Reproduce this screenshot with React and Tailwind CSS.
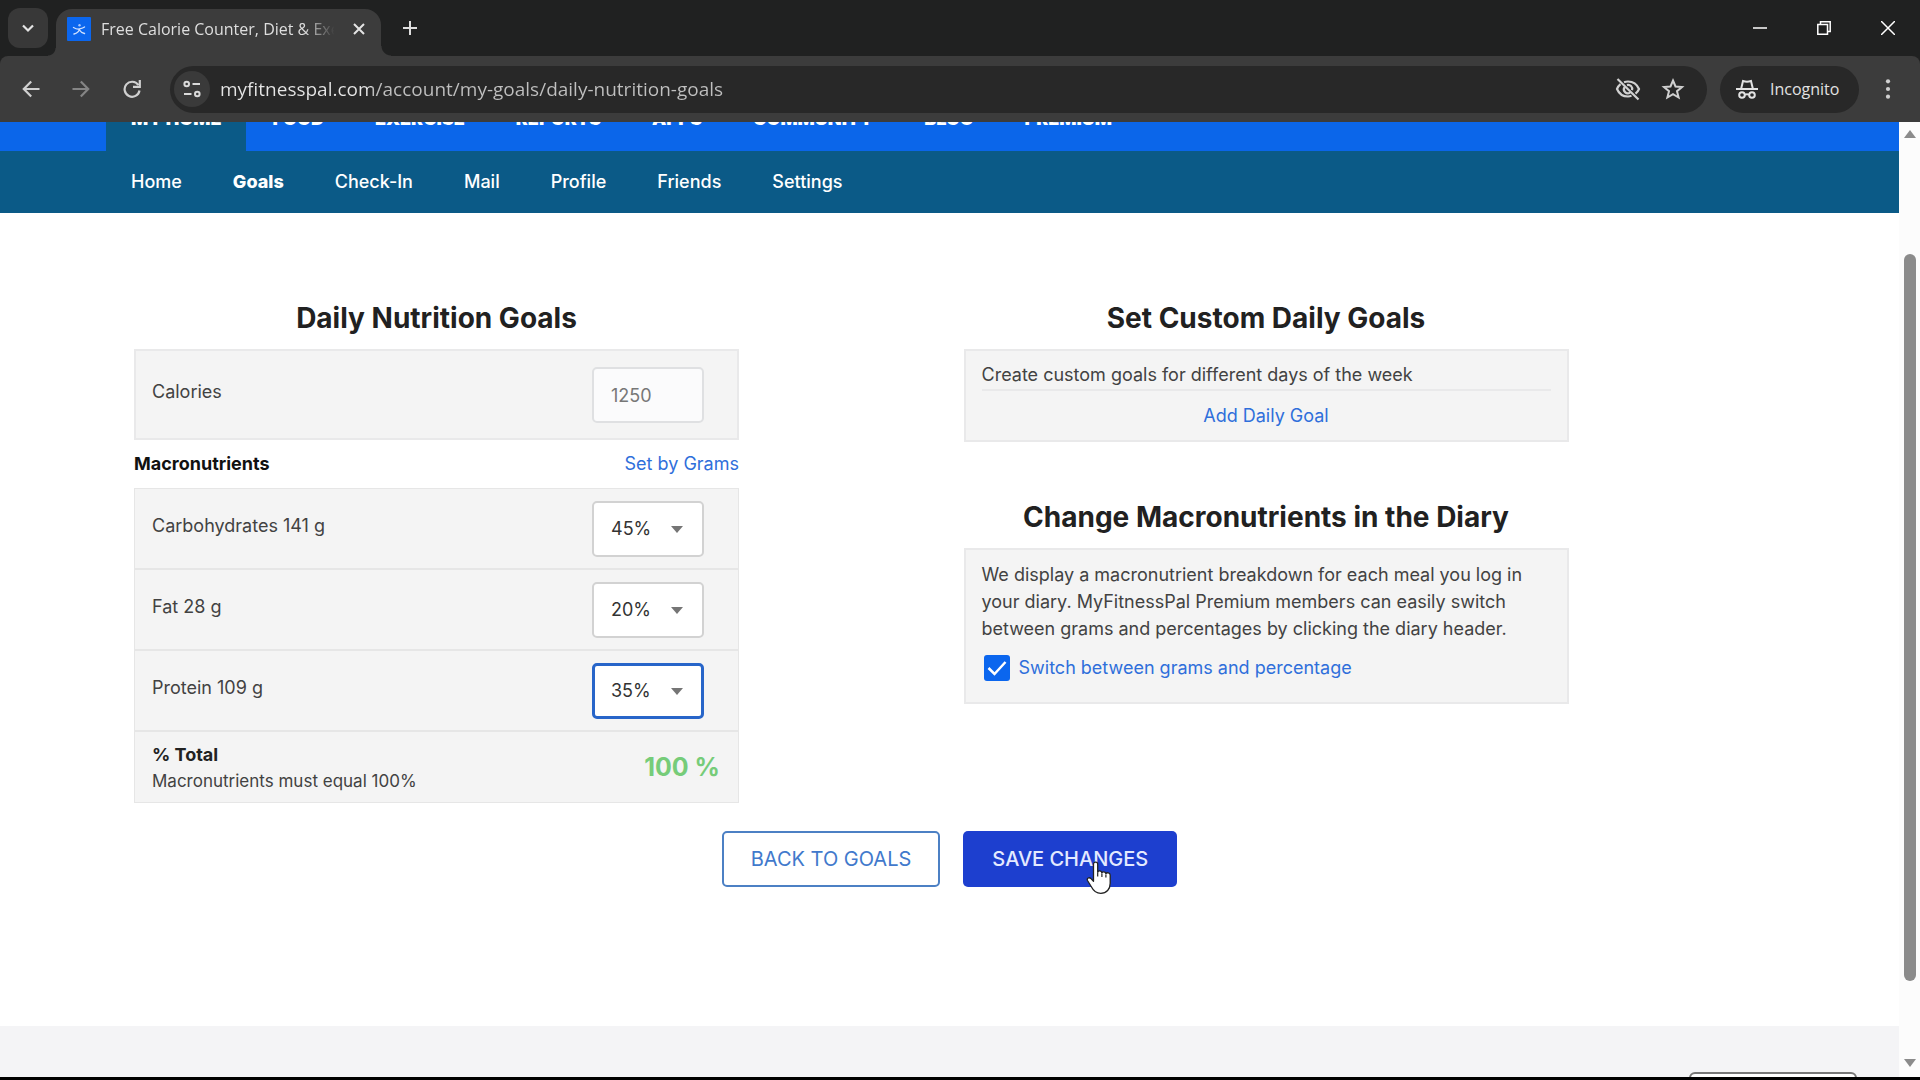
import React from "react";

const chromeFont = "font-['Open_Sans','Noto_Sans',sans-serif]";
const pageFont = "font-['Inter',sans-serif]";

const Favicon = () => (
  <svg viewBox="0 0 24 24" className="size-6 shrink-0" aria-hidden="true">
    <rect width="24" height="24" rx="1" fill="#0b66ee" />
    <circle cx="12.500" cy="8.300" r="1.200" fill="#a9c9ff" />
    <path d="M6.500 10.500c2.500 1.500 4.500 1.800 5.700 1.500s3.800-.8 5.300-2M12.300 12.500c-.4 2.500-2.800 3.800-5.300 4.500M12.500 13c1 1.800 2.300 2.800 5 3.500" stroke="#cfe0ff" strokeWidth="1.400" fill="none" strokeLinecap="round" />
  </svg>
);

const IncognitoIcon = () => (
  <svg viewBox="0 0 22 22" className="h-[22px] w-[22px] shrink-0" fill="none" stroke="#e2e2e2" strokeWidth="2" aria-hidden="true">
    <path d="M0 11h22" />
    <path d="M5.200 10.500 7 3q4 1.500 8 0l1.800 7.500" />
    <circle cx="6" cy="17" r="2.800" />
    <circle cx="16" cy="17" r="2.800" />
    <path d="M8.800 16.700q2.200-1 4.400 0" />
  </svg>
);

function TabStrip() {
  return (
    <div className={`flex h-14 shrink-0 items-stretch bg-[#202121] text-[#dedede] ${chromeFont}`}>
      <button aria-label="Search tabs" className="mt-2 ml-2 flex size-10 items-center justify-center rounded-xl bg-[#383838]">
        <svg viewBox="0 0 12 12" className="size-3" fill="none" stroke="#e4e4e4" strokeWidth="2.200" aria-hidden="true">
          <path d="M1 3.500 6 8.500l5-5" />
        </svg>
      </button>
      <div className="mt-[9px] flex flex-1">
        <div className="flex h-full w-2 items-end">
          <div className="size-2 bg-[radial-gradient(circle_at_0_0,#202121_7px,#3c3c3c_8px)]" />
        </div>
        <div className="flex w-[325px] items-center rounded-t-2xl bg-[#3c3c3c] pb-2 pl-[11px] pr-2.5">
          <Favicon />
          <span className="ml-2.5 w-[236px] overflow-hidden text-base whitespace-nowrap [mask-image:linear-gradient(to_right,black_86%,transparent_99%)]">
            Free Calorie Counter, Diet &amp; Exercise
          </span>
          <button aria-label="Close tab" className="ml-auto flex size-6 items-center justify-center">
            <svg viewBox="0 0 12 12" className="size-3" stroke="#e4e4e4" strokeWidth="2" aria-hidden="true">
              <path d="M1 1l10 10M11 1 1 11" />
            </svg>
          </button>
        </div>
        <div className="flex h-full w-2.5 items-end">
          <div className="size-2.5 bg-[radial-gradient(circle_at_100%_0,#202121_9px,#3c3c3c_10px)]" />
        </div>
        <button aria-label="New tab" className="ml-[7px] flex h-[38px] w-6 items-center justify-center">
          <svg viewBox="0 0 14 14" className="size-[14px]" stroke="#dedede" strokeWidth="2" aria-hidden="true">
            <path d="M7 0v14M0 7h14" />
          </svg>
        </button>
      </div>
      <div className="flex items-stretch">
        <button aria-label="Minimize" className="flex w-16 items-center justify-center">
          <svg viewBox="0 0 14 14" className="size-[14px]" stroke="#fff" strokeWidth="1.500" aria-hidden="true">
            <path d="M0 7h14" />
          </svg>
        </button>
        <button aria-label="Restore" className="flex w-16 items-center justify-center">
          <svg viewBox="0 0 14 14" className="size-[14px]" stroke="#fff" strokeWidth="1.500" fill="none" aria-hidden="true">
            <path d="M.8 3.500h9.700v9.700H.8zM3.500 3.500V.8h9.700v9.700h-2.700" />
          </svg>
        </button>
        <button aria-label="Close window" className="flex w-16 items-center justify-center">
          <svg viewBox="0 0 14 14" className="size-[14px]" stroke="#fff" strokeWidth="1.500" aria-hidden="true">
            <path d="M0 0l14 14M14 0 0 14" />
          </svg>
        </button>
      </div>
    </div>
  );
}

function Toolbar() {
  return (
    <div className={`flex h-[66px] shrink-0 items-center rounded-t-lg bg-[#3c3c3c] ${chromeFont}`}>
      <div className="flex">
        <button aria-label="Back" className="flex w-[61px] items-center justify-center">
          <svg viewBox="0 0 18 18" className="size-[18px]" fill="none" stroke="#d0d0d0" strokeWidth="2.200" aria-hidden="true">
            <path d="M17.500 9H2M9.200 1.500 1.800 9l7.400 7.500" />
          </svg>
        </button>
        <button aria-label="Forward" className="flex w-10 items-center justify-center">
          <svg viewBox="0 0 18 18" className="size-[18px]" fill="none" stroke="#858585" strokeWidth="2.200" aria-hidden="true">
            <path d="M.5 9H16M8.800 1.500 16.200 9l-7.400 7.500" />
          </svg>
        </button>
        <button aria-label="Reload" className="flex w-[61px] items-center justify-center">
          <svg viewBox="0 0 18 18" className="size-[18px]" fill="none" stroke="#d0d0d0" strokeWidth="2.200" aria-hidden="true">
            <path d="M15.300 5A7.500 7.500 0 1 0 16.500 10.500M16.800 0v6.800H10" />
          </svg>
        </button>
      </div>
      <div className="ml-2 flex h-[47px] flex-1 items-center rounded-full bg-[#282828] pl-1 pr-[22px]">
        <button aria-label="Site information" className="flex size-9 items-center justify-center rounded-full bg-[#3a3a3a]">
          <svg viewBox="0 0 18 18" className="size-[18px]" fill="none" stroke="#dadada" strokeWidth="2" aria-hidden="true">
            <circle cx="3.700" cy="4" r="2.300" />
            <path d="M9.500 4H17M1 14h7.500" />
            <circle cx="14.300" cy="14" r="2.300" />
          </svg>
        </button>
        <input
          aria-label="Address"
          defaultValue="myfitnesspal.com/account/my-goals/daily-nutrition-goals"
          className="ml-2.5 min-w-0 flex-1 bg-[linear-gradient(to_right,#e6e6e6_152px,#c0c0c0_152px)] bg-clip-text text-[19px] leading-7 text-transparent"
        />
        <button aria-label="Third-party cookies blocked" className="mr-5">
          <svg viewBox="0 0 26 24" className="h-6 w-[26px]" fill="none" stroke="#d0d0d0" strokeWidth="2.200" aria-hidden="true">
            <path d="M9 5.200A12 12 0 0 1 13 4.500c5 0 9 2.800 11 7.500a12.500 12.500 0 0 1-3.500 4.700M16.500 18.800a12 12 0 0 1-3.500.7c-5 0-9-2.800-11-7.500a12 12 0 0 1 3.500-4.800" />
            <path d="M12 8.100a4 4 0 0 1 5 5M15 15.600a4 4 0 0 1-5.600-5.400M2.500 2l21 20.500" />
          </svg>
        </button>
        <button aria-label="Bookmark this tab">
          <svg viewBox="0 0 24 24" className="size-6" fill="none" stroke="#d0d0d0" strokeWidth="2" aria-hidden="true">
            <path d="m12 3.500 2.500 6 6.500.5-5 4.200 1.600 6.300-5.600-3.400-5.600 3.400L8 14.200 3 10l6.500-.5z" />
          </svg>
        </button>
      </div>
      <button className="mx-[13px] flex h-[47px] w-[139px] items-center gap-3 rounded-full bg-[#282828] pl-4 text-base text-[#e2e2e2]">
        <IncognitoIcon />
        Incognito
      </button>
      <button aria-label="Menu" className="mr-4 flex w-8 items-center justify-center">
        <svg viewBox="0 0 6 20" className="h-5 w-1.5" fill="#d0d0d0" aria-hidden="true">
          <circle cx="3" cy="2.300" r="2.100" />
          <circle cx="3" cy="10" r="2.100" />
          <circle cx="3" cy="17.700" r="2.100" />
        </svg>
      </button>
    </div>
  );
}

const mainNav = ["MY HOME", "FOOD", "EXERCISE", "REPORTS", "APPS", "COMMUNITY", "BLOG", "PREMIUM"];
const subNav = ["Home", "Goals", "Check-In", "Mail", "Profile", "Friends", "Settings"];

function SiteNav() {
  return (
    <>
      <nav aria-label="Main" className="flex h-[29px] items-end gap-px overflow-hidden bg-[#0b66ea] pl-[106px] text-lg leading-6 font-black text-white">
        {mainNav.map((item) => (
          <a key={item} href="#" className={item === "MY HOME" ? "bg-[#0b5a87] px-[25px] pt-4 pb-5" : "px-[25px] pt-4 pb-5"}>
            {item}
          </a>
        ))}
      </nav>
      <nav aria-label="My home" className="flex h-[62px] items-center gap-[51px] bg-[#0b5a87] pl-[131px] text-lg font-medium text-white">
        {subNav.map((item) => (
          <a key={item} href="#" className={item === "Goals" ? "font-extrabold" : ""}>
            {item}
          </a>
        ))}
      </nav>
    </>
  );
}

const Heading = ({ children }) => (
  <h2 className="text-center text-[28px] leading-8 font-bold text-[#212121]">{children}</h2>
);

const macros = [
  { id: "carbs", label: "Carbohydrates 141 g", value: "45%" },
  { id: "fat", label: "Fat 28 g", value: "20%" },
  { id: "protein", label: "Protein 109 g", value: "35%", active: true },
];

function MacroRow({ id, label, value, active }) {
  return (
    <div className="flex items-start justify-between border-b-2 border-[#e6e6e6] pt-3 pr-[34px] pb-[11px] pl-[17px]">
      <label htmlFor={id} className="pt-[13px] leading-6">{label}</label>
      <div className="relative w-28">
        <select
          id={id}
          defaultValue={value}
          className={
            active
              ? "h-14 w-full appearance-none rounded-[5px] border-[3px] border-[#2765c9] bg-white pl-4 text-[#333]"
              : "h-14 w-full appearance-none rounded-[5px] border-2 border-[#d2d2d2] bg-white pl-[17px] text-[#333]"
          }
        >
          <option>{value}</option>
        </select>
        <svg viewBox="0 0 14 8" className="pointer-events-none absolute top-[25px] right-5 h-2 w-3.5" aria-hidden="true">
          <path d="M1 0h12L7 7z" fill="#757575" />
        </svg>
      </div>
    </div>
  );
}

function NutritionGoals() {
  return (
    <section className="max-w-[605px]">
      <Heading>Daily Nutrition Goals</Heading>
      <div className="mt-[15px] flex items-start justify-between border-2 border-[#e9e9ea] bg-[#f4f4f4] pt-4 pr-[33px] pb-[15px] pl-4">
        <label htmlFor="calories" className="pt-[13px] leading-6">Calories</label>
        <input
          id="calories"
          defaultValue="1250"
          className="h-14 w-28 rounded-[5px] border-2 border-[#dfe0e2] bg-[#fbfbfc] px-[17px] text-[#777]"
        />
      </div>
      <div className="flex h-12 items-center justify-between">
        <h3 className="font-bold text-[#111]">Macronutrients</h3>
        <a href="#" className="text-[#2f6fdb]">Set by Grams</a>
      </div>
      <div className="border border-[#e6e6e6] bg-[#f4f4f4]">
        {macros.map((m) => (
          <MacroRow key={m.id} {...m} />
        ))}
        <div className="flex items-center justify-between pt-[9px] pr-[18px] pb-[9px] pl-[17px]">
          <div>
            <p className="leading-7 font-bold text-[#222]">% Total</p>
            <p className="text-[17px] leading-6">Macronutrients must equal 100%</p>
          </div>
          <p className="text-[25px] font-bold text-[#76cc79]">100 %</p>
        </div>
      </div>
    </section>
  );
}

function CustomGoals() {
  return (
    <section>
      <Heading>Set Custom Daily Goals</Heading>
      <div className="mt-[15px] border-2 border-[#e9e9ea] bg-[#f4f4f4] px-4 pt-2.5 pb-3">
        <p className="border-b-2 border-[#e9e9ea] leading-7">Create custom goals for different days of the week</p>
        <p className="pt-[13px] text-center leading-6">
          <a href="#" className="text-[#2f6fdb]">Add Daily Goal</a>
        </p>
      </div>
    </section>
  );
}

function DiaryMacros() {
  return (
    <section>
      <Heading>Change Macronutrients in the Diary</Heading>
      <div className="mt-[15px] border-2 border-[#e9e9ea] bg-[#f4f4f4] px-4 pt-[11px] pb-5">
        <p className="leading-[27px]">
          We display a macronutrient breakdown for each meal you log in your diary. MyFitnessPal Premium members can easily
          switch between grams and percentages by clicking the diary header.
        </p>
        <label className="mt-3 flex items-center gap-[9px] pl-0.5 text-[#2f6fdb]">
          <span className="grid">
            <input type="checkbox" defaultChecked className="col-start-1 row-start-1 size-[26px] appearance-none rounded-[3px] bg-[#0b66ee]" />
            <svg viewBox="0 0 26 26" className="pointer-events-none col-start-1 row-start-1 size-[26px]" fill="none" stroke="#fff" strokeWidth="2.500" aria-hidden="true">
              <path d="m4.500 13 6 6L21.500 7" />
            </svg>
          </span>
          Switch between grams and percentage
        </label>
      </div>
    </section>
  );
}

const HandCursor = () => (
  <svg viewBox="0 0 26 34" className="pointer-events-none absolute top-[30px] left-[123px] h-[34px] w-[26px]" aria-hidden="true">
    <path
      d="M7.500 3.200c0-2.800 4.200-2.800 4.200 0v8c.6-1.900 3.900-1.600 4.200.6.700-1.600 3.700-1.200 4 .9.700-1.500 4.300-1.200 4.300 1.600v8c0 6-3.700 10-9.400 10-4.800 0-7.300-2.300-9.300-6.300L1.500 19.500c-1-2.400 1.800-3.700 3.500-1.900l2.500 2.700z"
      fill="#fff"
      stroke="#222"
      strokeWidth="1.300"
      strokeLinejoin="round"
    />
    <path d="M11.700 11.500v4M15.900 12.500v3.500M19.900 13.500v3" stroke="#222" strokeWidth="1.200" fill="none" />
  </svg>
);

function Scrollbar() {
  return (
    <div className="flex w-[21px] shrink-0 flex-col items-center bg-[#fcfcfc]">
      <svg viewBox="0 0 12 8" className="mt-2 h-2 w-3" aria-hidden="true">
        <path d="M0 8h12L6 0z" fill="#8b8b8b" />
      </svg>
      <div className="flex w-3 flex-1 flex-col pt-[116px] pb-[78px]">
        <div className="flex-1 rounded-full bg-[#8b8b8b]" />
      </div>
      <svg viewBox="0 0 12 8" className="mb-2.5 h-2 w-3" aria-hidden="true">
        <path d="M0 0h12L6 8z" fill="#8b8b8b" />
      </svg>
    </div>
  );
}

export default function App() {
  return (
    <div className="flex h-screen flex-col overflow-hidden border-b-[3px] border-black bg-[#202121]">
      <TabStrip />
      <Toolbar />
      <div className={`flex min-h-0 flex-1 bg-white ${pageFont}`}>
        <div className="flex min-w-0 flex-1 flex-col overflow-hidden">
          <SiteNav />
          <main className="flex-1 text-lg text-[#424242]">
            <div className="mr-[106px] ml-[134px] grid grid-cols-2 pt-[89px]">
              <NutritionGoals />
              <div className="flex max-w-[605px] flex-col gap-[59px]">
                <CustomGoals />
                <DiaryMacros />
              </div>
            </div>
            <div className="mt-7 flex justify-center gap-[23px]">
              <button className="h-14 rounded-[5px] border-2 border-[#4c80c4] px-[27px] text-xl text-[#4179cc]">BACK TO GOALS</button>
              <div className="relative">
                <button className="h-14 rounded-[5px] bg-[#1d3fcf] px-[29px] text-xl font-medium text-[#e4eaff]">SAVE CHANGES</button>
                <HandCursor />
              </div>
            </div>
          </main>
          <footer className="flex h-[51px] shrink-0 justify-end overflow-hidden bg-[#f4f4f6] pt-[46px] pr-[42px]">
            <button aria-label="Language" className="h-12 w-[168px] rounded-md border-2 border-[#777] bg-white" />
          </footer>
        </div>
        <Scrollbar />
      </div>
    </div>
  );
}
